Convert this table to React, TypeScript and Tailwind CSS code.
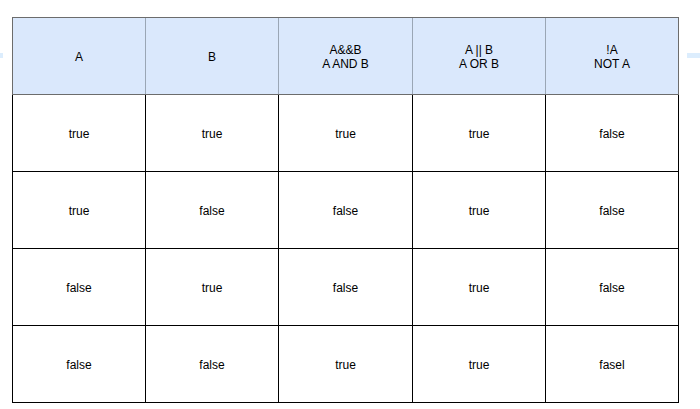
const widths = ["w-[132px]", "w-[133px]", "w-[134px]", "w-[133px]", "w-[133px]"];

const header = [["A"], ["B"], ["A&&B", "A AND B"], ["A || B", "A OR B"], ["!A", "NOT A"]];

const rows = [
  ["true", "true", "true", "true", "false"],
  ["true", "false", "false", "true", "false"],
  ["false", "true", "false", "true", "false"],
  ["false", "false", "true", "true", "fasel"],
];

export default function App() {
  return (
    <div
      className="relative w-[700px] h-[409px] bg-white text-black text-[12px] leading-[14px]"
      style={{ fontFamily: '"Liberation Sans", Arial, sans-serif' }}
    >
      {/* connection hints */}
      <div className="absolute left-0 top-[53px] w-[3px] h-[5px] bg-[#dcedfd]" />
      <div className="absolute left-[687px] top-[53px] w-[13px] h-[5px] bg-[#dcedfd]" />

      <div className="pt-[17px] pl-[12px]">
        <div className="w-[667px]">
          <div className="flex h-[78px] border border-[#6c6c6c] bg-[#dae8fc]">
            {header.map((lines, i) => (
              <div
                key={i}
                className={`${widths[i]} flex flex-col items-center justify-center text-center pt-[2px] ${
                  i > 0 ? "border-l border-[#9aa6b5]" : ""
                }`}
              >
                {lines.map((l) => (
                  <span key={l}>{l}</span>
                ))}
              </div>
            ))}
          </div>
          {rows.map((row, r) => (
            <div key={r} className="flex h-[77px] border-x border-b border-black">
              {row.map((cell, i) => (
                <div
                  key={i}
                  className={`${widths[i]} flex items-center justify-center pt-[2px] ${
                    i > 0 ? "border-l border-black" : ""
                  }`}
                >
                  {cell}
                </div>
              ))}
            </div>
          ))}
        </div>
      </div>
    </div>
  );
}
